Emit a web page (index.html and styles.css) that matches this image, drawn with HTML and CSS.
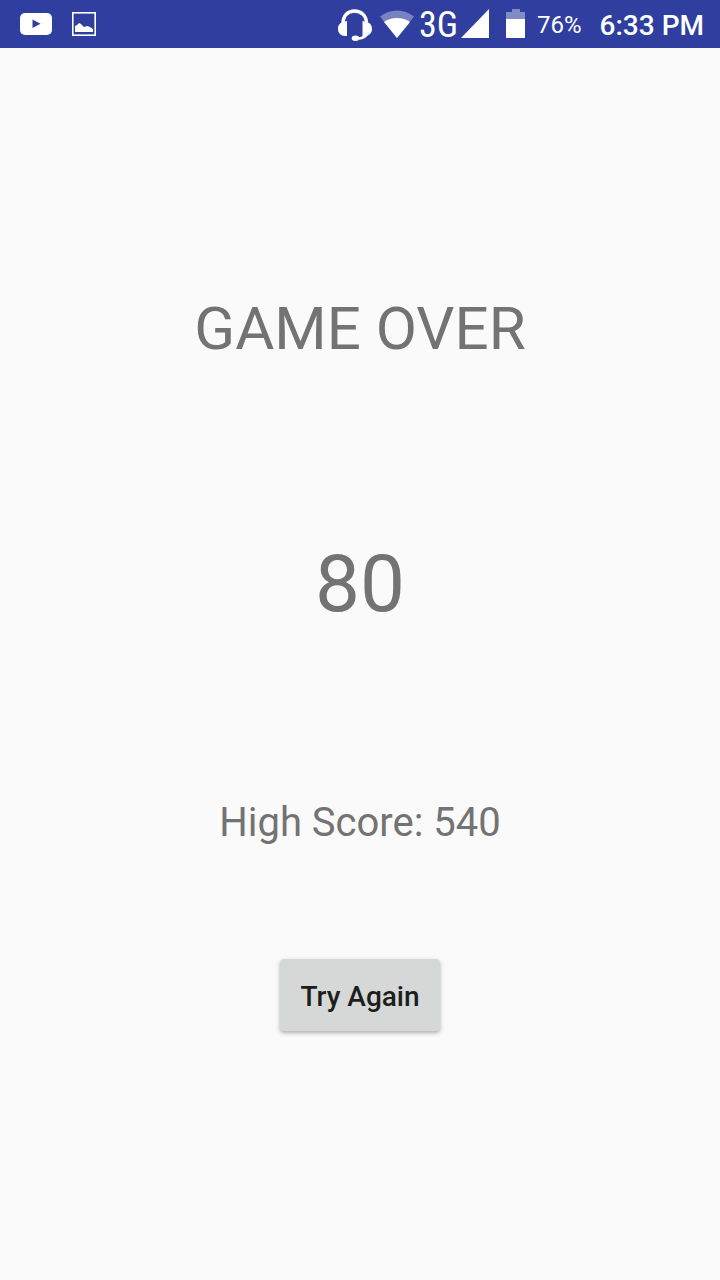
FILE: index.html
```html
<!DOCTYPE html>
<html lang="en">
<head>
<meta charset="utf-8">
<meta name="viewport" content="width=device-width, initial-scale=1">
<title>Game Over</title>
<link rel="stylesheet" href="styles.css">
</head>
<body>
<header class="status-bar">
  <div class="notifications">
    <svg width="32" height="24" viewBox="0 0 32 24" role="img" aria-label="Video"><rect y="1" width="32" height="22" rx="5" fill="#fff"/><path d="M12.500 7.500v8.500l8-4.250z" fill="#303f9f"/></svg>
    <svg width="24" height="24" viewBox="0 0 24 24" role="img" aria-label="Picture"><rect x=".8" y=".8" width="22.400" height="22.400" fill="none" stroke="#fff" stroke-width="1.600"/><path d="M3 20v-6l2-1 2-2 2 1 3 3 3-1 3 1 3 2v3z" fill="#fff"/></svg>
  </div>
  <div class="indicators">
    <svg class="headset" width="36" height="32" viewBox="0 0 36 32" role="img" aria-label="Headset"><path d="M6 14.500C6 6.500 11 2 17.500 2S29.500 6.500 29.500 14.500" fill="none" stroke="#fff" stroke-width="3.400"/><path d="M30 25c-1.500 2.500-4 4-8 4.500" fill="none" stroke="#fff" stroke-width="2.500"/><path d="M10 12v15H8c-4 0-7-3-7-7s2-6 5-7zM25.500 12v15h2.500c4 0 7-3 7-7s-2-6-5-7z" fill="#fff"/><ellipse cx="18.500" cy="29.300" rx="3.800" ry="2.700" fill="#fff"/></svg>
    <svg class="wifi" width="36" height="32" viewBox="0 0 36 32" role="img" aria-label="Wi-Fi"><path d="M1 8.500C11 .5 25 .5 35 8.500L18 30z" fill="#fff" opacity=".35"/><path d="M5 14C12 8.500 24 8.500 31 14L18 30z" fill="#fff"/></svg>
    <span class="network">3G</span>
    <svg class="signal" width="30" height="30" viewBox="0 0 30 30" role="img" aria-label="Signal"><path d="M1 29L29 0v29z" fill="#fff"/></svg>
    <svg class="battery" width="20" height="30" viewBox="0 0 20 30" role="img" aria-label="Battery"><path d="M0 3h6V0h8v3h5v7H0z" fill="#fff" opacity=".4"/><path d="M0 10h19v19H0z" fill="#fff"/></svg>
    <span class="percent">76%</span>
    <time class="clock">6:33 PM</time>
  </div>
</header>
<main class="screen">
  <h1 class="title">GAME OVER</h1>
  <p class="score">80</p>
  <p class="high-score">High Score: 540</p>
  <button class="retry" type="button">Try Again</button>
</main>
</body>
</html>
```
FILE: styles.css
```css
* { box-sizing: border-box; }

body {
  margin: 0;
  min-height: 100vh;
  background: #fafafa;
  color: #737373;
  font-family: Roboto, sans-serif;
}

svg { display: block; flex: none; }

.status-bar {
  display: flex;
  align-items: center;
  justify-content: space-between;
  height: 48px;
  padding: 0 16px 0 20px;
  background: #303f9f;
  color: #fff;
}

.notifications,
.indicators {
  display: flex;
  align-items: center;
}

.notifications { gap: 20px; }

.headset { margin-top: 2px; }

.wifi { margin-left: 6px; }

.network {
  margin-left: 4px;
  padding-top: 2px;
  font-family: "Roboto Condensed", Roboto, sans-serif;
  font-size: 36px;
  line-height: 46px;
}

.signal { margin-left: 2px; }

.battery { margin-left: 16px; }

.percent {
  margin-left: 11px;
  padding-top: 2px;
  font-size: 24px;
  line-height: 46px;
}

.clock {
  margin-left: 18px;
  padding-top: 4px;
  font-size: 28px;
  font-weight: 500;
  line-height: 44px;
}

.screen {
  display: flex;
  flex-direction: column;
  align-items: center;
  padding-top: 246px;
}

.title,
.score,
.high-score {
  margin: 0;
  font-weight: 400;
  text-align: center;
}

.title {
  font-size: 60px;
  line-height: 70px;
}

.score {
  margin-top: 173px;
  font-size: 80px;
  line-height: 94px;
}

.high-score {
  margin-top: 168px;
  font-size: 40px;
  line-height: 48px;
}

.retry {
  min-width: 160px;
  height: 72px;
  margin-top: 112px;
  padding: 2px 20px 0;
  border: 0;
  border-radius: 4px;
  background: #d6d8d7;
  color: #1c1e1d;
  font-family: inherit;
  font-size: 28px;
  font-weight: 500;
  box-shadow: 0 2px 4px rgba(0, 0, 0, 0.3);
}
```
